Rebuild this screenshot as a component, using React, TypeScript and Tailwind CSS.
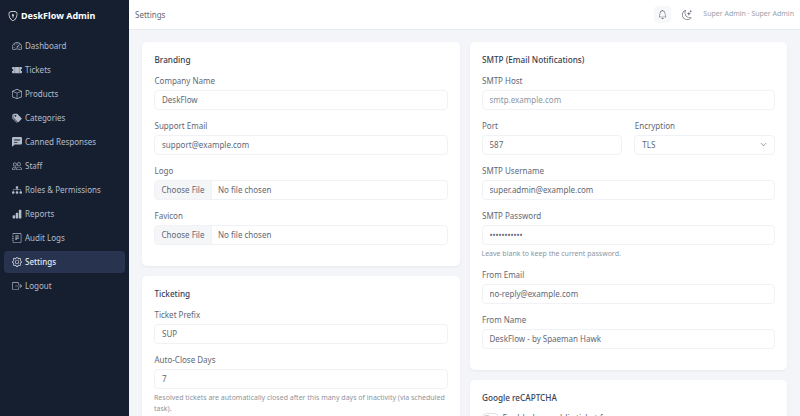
import * as React from "react";
import {
  BsShieldLock,
  BsSpeedometer2,
  BsTicketPerforatedFill,
  BsBox,
  BsTagsFill,
  BsChatLeftTextFill,
  BsPeople,
  BsDiagram3Fill,
  BsBarChartFill,
  BsJournalText,
  BsGear,
  BsBoxArrowRight,
  BsBell,
  BsMoonStars,
  BsChevronDown,
} from "react-icons/bs";

const navItems = [
  { label: "Dashboard", icon: BsSpeedometer2 },
  { label: "Tickets", icon: BsTicketPerforatedFill },
  { label: "Products", icon: BsBox },
  { label: "Categories", icon: BsTagsFill },
  { label: "Canned Responses", icon: BsChatLeftTextFill },
  { label: "Staff", icon: BsPeople },
  { label: "Roles & Permissions", icon: BsDiagram3Fill },
  { label: "Reports", icon: BsBarChartFill },
  { label: "Audit Logs", icon: BsJournalText },
  { label: "Settings", icon: BsGear, active: true },
  { label: "Logout", icon: BsBoxArrowRight },
];

function Label({ children }: { children: React.ReactNode }) {
  return <div className="h-[11px] leading-[11px] text-[8px] text-[#5f6875] mb-[4px] pl-[0.5px]">{children}</div>;
}

function Input({ label, value, muted, password }: { label: string; value: string; muted?: boolean; password?: boolean }) {
  return (
    <div>
      <Label>{label}</Label>
      <input
        readOnly
        type={password ? "password" : "text"}
        value={value}
        className={`block w-full h-[20px] px-[7px] text-[8px] bg-white border border-[#f0f2f5] rounded-[4px] outline-none ${muted ? "text-[#8d95a0]" : "text-[#5f6875]"}`}
      />
    </div>
  );
}

function FileInput({ label }: { label: string }) {
  return (
    <div>
      <Label>{label}</Label>
      <div className="flex h-[20px] text-[8px] border border-[#f0f2f5] rounded-[4px] overflow-hidden text-[#5f6875]">
        <div className="w-[57px] bg-[#f5f6f8] border-r border-[#f0f2f5] flex items-center justify-center">Choose File</div>
        <div className="flex items-center pl-[6px]">No file chosen</div>
      </div>
    </div>
  );
}

function Card({ title, children }: { title: string; children: React.ReactNode }) {
  return (
    <section className="bg-white rounded-[5px] shadow-[0_1px_3px_rgba(15,23,42,0.05)] px-[12px] pt-[12px] pb-[21.5px]">
      <h2 className="h-[12px] leading-[12px] text-[8.2px] font-medium text-[#374151] mb-[8.5px] pl-[0.5px]">{title}</h2>
      <div className="flex flex-col gap-[10px]">{children}</div>
    </section>
  );
}

export default function App() {
  return (
    <div className="flex h-screen overflow-hidden bg-[#f3f5f9]" style={{ fontFamily: '"Noto Sans", sans-serif' }}>
      {/* Sidebar */}
      <aside className="w-[129px] shrink-0 bg-[#161f30]">
        <div className="flex items-center gap-[3px] pl-[8px] h-[31px] text-white text-[9px] font-bold">
          <BsShieldLock className="text-[10px]" />
          DeskFlow Admin
        </div>
        <nav className="flex flex-col gap-[2px] px-[4px] mt-[4px]">
          {navItems.map(({ label, icon: Icon, active }) => (
            <a
              key={label}
              className={`flex items-center gap-[3px] h-[22px] pl-[8px] rounded-[4px] text-[8px] ${active ? "bg-[#28344f] text-[#e5e9f0] font-medium" : "text-[#b4bcc9]"}`}
            >
              <Icon className="text-[10px] shrink-0" />
              {label}
            </a>
          ))}
        </nav>
      </aside>

      <div className="flex-1 min-w-0 flex flex-col">
        {/* Topbar */}
        <header className="h-[30px] shrink-0 bg-white border-b border-[#e8ebf0] flex items-center justify-between pl-[6px] pr-[6px]">
          <span className="text-[8px] text-[#5f6875]">Settings</span>
          <div className="flex items-center text-[#5f6875]">
            <span className="w-[17px] h-[17px] rounded-[4px] bg-[#f7f8fa] flex items-center justify-center">
              <BsBell className="text-[9px]" />
            </span>
            <BsMoonStars className="text-[10px] ml-[11px]" />
            <span className="ml-[11px] text-[7px] text-[#9aa1ab]">Super Admin · Super Admin</span>
          </div>
        </header>

        {/* Settings forms */}
        <main className="flex-1 min-h-0 overflow-hidden grid grid-cols-2 gap-[10px] pl-[13px] pr-[13px] pt-[12px] items-start">
          <div className="flex flex-col gap-[10px]">
            <Card title="Branding">
              <Input label="Company Name" value="DeskFlow" />
              <Input label="Support Email" value="support@example.com" />
              <FileInput label="Logo" />
              <FileInput label="Favicon" />
            </Card>
            <Card title="Ticketing">
              <Input label="Ticket Prefix" value="SUP" />
              <div>
                <Input label="Auto-Close Days" value="7" />
                <p className="mt-[3px] text-[7px] leading-[11px] text-[#8d95a0]">
                  Resolved tickets are automatically closed after this many days of inactivity (via scheduled task).
                </p>
              </div>
            </Card>
          </div>

          <div className="flex flex-col gap-[10px]">
            <Card title="SMTP (Email Notifications)">
              <Input label="SMTP Host" value="smtp.example.com" muted />
              <div className="grid grid-cols-2 gap-[12px]">
                <Input label="Port" value="587" />
                <div>
                  <Label>Encryption</Label>
                  <div className="flex items-center justify-between h-[20px] px-[7px] text-[8px] text-[#5f6875] border border-[#f0f2f5] rounded-[4px]">
                    TLS
                    <BsChevronDown className="text-[7px]" />
                  </div>
                </div>
              </div>
              <Input label="SMTP Username" value="super.admin@example.com" />
              <div>
                <Input label="SMTP Password" value="secretsecre" password />
                <p className="mt-[3px] text-[7px] leading-[11px] text-[#8d95a0]">Leave blank to keep the current password.</p>
              </div>
              <Input label="From Email" value="no-reply@example.com" />
              <Input label="From Name" value="DeskFlow - by Spaeman Hawk" />
            </Card>
            <Card title="Google reCAPTCHA">
              <div className="-mt-[1px] flex items-center gap-[4px] text-[8.5px] text-[#5f6875]">
                <span className="w-[17px] h-[9px] rounded-full border border-[#dfe3e8] bg-white flex items-center pl-[1px]">
                  <span className="w-[6px] h-[6px] rounded-full bg-[#c3c7cd]" />
                </span>
                Enabled on public ticket form
              </div>
            </Card>
          </div>
        </main>
      </div>
    </div>
  );
}
